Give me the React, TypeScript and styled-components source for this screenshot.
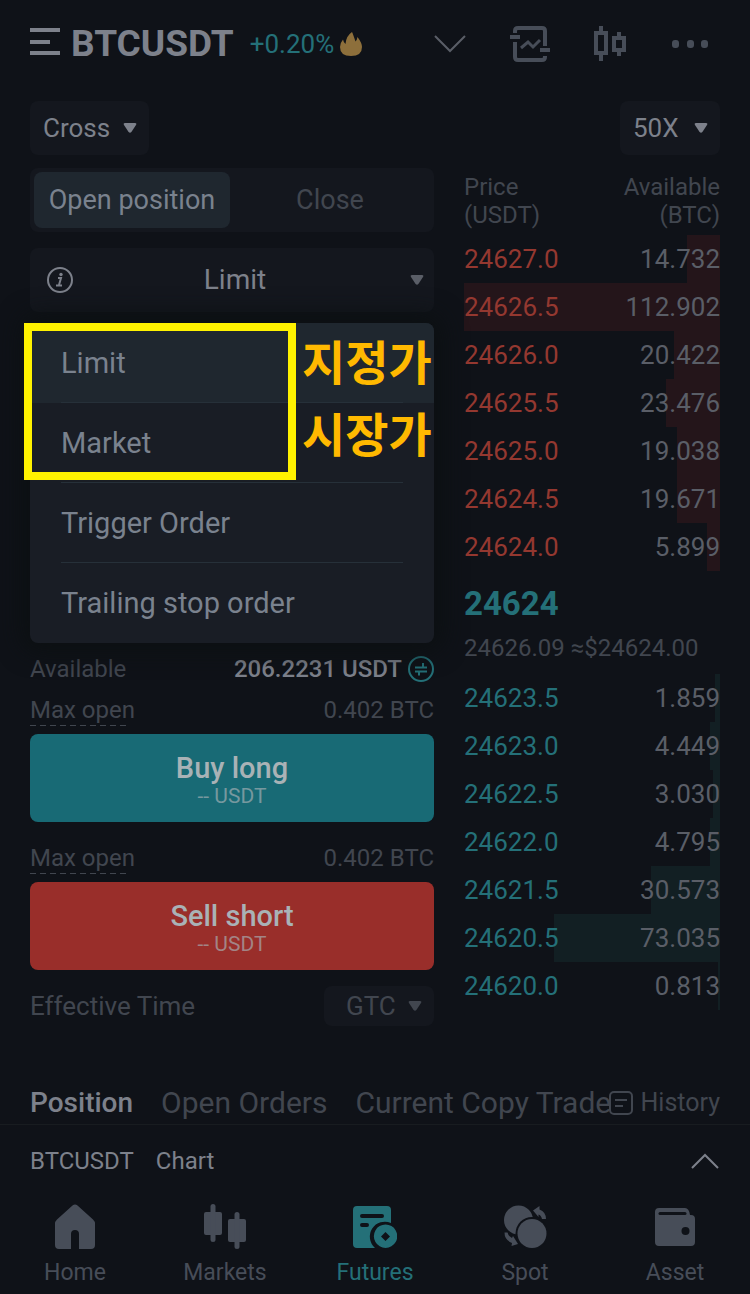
import React from "react";
import styled, { createGlobalStyle } from "styled-components";

const c = {
  bg: "#0f1218",
  panel: "#14171e",
  active: "#1f272f",
  menu: "#191d25",
  line: "#263039",
  text: "#7d818b",
  soft: "#7a828e",
  mute: "#41464f",
  icon: "#474d58",
  dim: "#5a5e67",
  teal: "#247078",
  tealFill: "#186a75",
  red: "#943830",
  redFill: "#992e2a",
};

const Global = createGlobalStyle`
  *, *::before, *::after { box-sizing: border-box; }
  body { margin: 0; background: ${c.bg}; }
  button, select { font: inherit; color: inherit; background: none; border: 0; padding: 0; margin: 0; }
  svg { display: block; flex: none; }
`;

const Page = styled.main`
  min-height: 100vh;
  display: flex;
  flex-direction: column;
  overflow: hidden;
  background: ${c.bg};
  color: ${c.text};
  font-family: Roboto, "Noto Sans CJK KR", sans-serif;
  font-size: 24px;
  line-height: 28px;
`;

const Header = styled.header`
  display: flex;
  align-items: center;
  height: 88px;
  padding: 0 20px 0 30px;
`;
const Pair = styled.h1`
  margin: 0 16px 0 11px;
  font-size: 37px;
  line-height: 44px;
  font-weight: 700;
`;
const Change = styled.span`
  margin-right: 6px;
  font-size: 26px;
  color: ${c.teal};
`;
const Actions = styled.div`
  display: flex;
  margin-left: auto;
  color: ${c.icon};
`;
const IconButton = styled.button`
  display: flex;
  align-items: center;
  justify-content: center;
  width: 80px;
  height: 48px;
`;
const PlainButton = styled.button`
  display: flex;
`;

const Modes = styled.div`
  display: flex;
  justify-content: space-between;
  padding: 13px 30px;
`;
const Picker = styled.label<{ $w: number; $h: number; $tone?: string }>`
  display: flex;
  align-items: center;
  position: relative;
  width: ${(p) => p.$w}px;
  height: ${(p) => p.$h}px;
  border-radius: 8px;
  background: ${c.panel};
  color: ${(p) => p.$tone ?? c.text};
  font-size: 26px;
  svg {
    position: absolute;
    right: 12px;
    pointer-events: none;
  }
`;
const Select = styled.select<{ $pad: number }>`
  appearance: none;
  width: 100%;
  height: 100%;
  padding-left: ${(p) => p.$pad}px;
`;

const Columns = styled.div`
  display: grid;
  grid-template-columns: 404fr 256fr;
  gap: 30px;
  padding: 0 30px;
`;
const Order = styled.section`
  display: flex;
  flex-direction: column;
`;
const Segments = styled.div`
  display: flex;
  height: 64px;
  padding: 4px;
  border-radius: 8px;
  background: ${c.panel};
`;
const Segment = styled.button<{ $on?: boolean }>`
  flex: ${(p) => (p.$on ? "0 0 196px" : "1")};
  border-radius: 8px;
  font-size: 27px;
  background: ${(p) => (p.$on ? c.active : "transparent")};
  color: ${(p) => (p.$on ? c.soft : c.mute)};
`;
const TypeButton = styled.button`
  display: grid;
  grid-template-columns: 28px 1fr 28px;
  align-items: center;
  height: 64px;
  margin-top: 16px;
  padding: 0 10px 0 16px;
  border-radius: 8px;
  background: ${c.panel};
  color: ${c.text};
  font-size: 28px;
  svg:last-child {
    justify-self: end;
    color: ${c.dim};
  }
`;
const MenuArea = styled.div`
  position: relative;
  margin-top: 11px;
`;
const Menu = styled.ul`
  margin: 0;
  padding: 0;
  list-style: none;
  border-radius: 8px;
  background: ${c.menu};
  box-shadow: 0 0 24px 8px #0c1012;
`;
const Option = styled.li<{ $on?: boolean }>`
  height: 80px;
  padding: 0 31px;
  border-radius: ${(p) => (p.$on ? "8px 8px 0 0" : "0")};
  background: ${(p) => (p.$on ? c.active : "transparent")};
  &:not(:last-child) button {
    border-bottom: 1px solid ${c.line};
  }
`;
const OptionButton = styled.button`
  width: 100%;
  height: 80px;
  text-align: left;
  font-size: 29px;
  color: ${c.soft};
`;
const Marker = styled.div`
  position: absolute;
  top: 0;
  left: -6px;
  width: 272px;
  height: 157px;
  border: 8px solid #fff200;
  pointer-events: none;
`;
const Notes = styled.div`
  position: absolute;
  top: 1px;
  left: 272px;
  display: grid;
  grid-auto-rows: 72px;
  align-items: center;
  color: #ffb900;
  font: 700 47px/72px "Noto Sans CJK KR", sans-serif;
  white-space: nowrap;
  pointer-events: none;
`;

const Row = styled.div<{ $mt: number }>`
  display: flex;
  align-items: center;
  justify-content: space-between;
  height: 32px;
  margin-top: ${(p) => p.$mt}px;
  color: ${c.mute};
`;
const Balance = styled.span`
  display: flex;
  align-items: center;
  gap: 6px;
  color: ${c.text};
  font-weight: 500;
  svg {
    color: ${c.teal};
  }
`;
const Hint = styled.span`
  height: 32px;
  padding-top: 2px;
  background: repeating-linear-gradient(90deg, ${c.mute} 0 6px, transparent 6px 10px) bottom left / 100px 1px no-repeat;
`;
const Submit = styled.button<{ $fill: string }>`
  display: flex;
  flex-direction: column;
  align-items: center;
  justify-content: center;
  height: 88px;
  margin-top: 8px;
  padding-top: 4px;
  border-radius: 8px;
  background: ${(p) => p.$fill};
  color: #a9b2b6;
  font-weight: 500;
  font-size: 29px;
  line-height: 32px;
  small {
    font-weight: 400;
    font-size: 21px;
    line-height: 24px;
    opacity: 0.65;
  }
`;
const Effective = styled.div`
  display: flex;
  align-items: center;
  justify-content: space-between;
  margin-top: 16px;
  color: ${c.mute};
  font-size: 26px;
`;

const Book = styled.table`
  width: 100%;
  border-collapse: collapse;
  align-self: start;
  font-size: 26px;
  th {
    height: 67px;
    padding: 5px 0 0;
    vertical-align: top;
    text-align: left;
    font-weight: 400;
    font-size: 24px;
    color: ${c.mute};
  }
  td {
    padding: 0;
  }
  th:last-child,
  td + td {
    text-align: right;
  }
`;
const Level = styled.tr<{ $depth: number; $side: "ask" | "bid" }>`
  height: 48px;
  color: ${c.dim};
  background: linear-gradient(
    to left,
    ${(p) => (p.$side === "ask" ? "#24151a" : "#121f23")} ${(p) => p.$depth}%,
    transparent ${(p) => p.$depth}%
  );
  td:first-child {
    color: ${(p) => (p.$side === "ask" ? c.red : c.teal)};
  }
`;
const Last = styled.td`
  height: 103px;
  color: ${c.mute};
  strong {
    display: block;
    padding-bottom: 10px;
    font-size: 33px;
    line-height: 40px;
    color: ${c.teal};
  }
  span {
    display: block;
    font-size: 24px;
    white-space: nowrap;
  }
`;

const Positions = styled.div`
  display: flex;
  align-items: center;
  height: 43px;
  margin-top: 56px;
  padding: 0 30px;
  border-bottom: 1px solid #181c20;
  color: ${c.mute};
`;
const Tabs = styled.div`
  display: flex;
  gap: 28px;
  flex: 1;
  min-width: 0;
  overflow: hidden;
`;
const Tab = styled.button<{ $on?: boolean }>`
  flex: none;
  white-space: nowrap;
  font-weight: ${(p) => (p.$on ? 500 : 400)};
  font-size: ${(p) => (p.$on ? 28 : 30)}px;
  line-height: 40px;
  color: ${(p) => (p.$on ? c.text : c.mute)};
`;
const History = styled.a`
  display: flex;
  align-items: center;
  gap: 7px;
  color: inherit;
  font-size: 25px;
  text-decoration: none;
`;
const ChartBar = styled.div`
  display: flex;
  align-items: center;
  gap: 22px;
  height: 72px;
  padding: 0 30px;
  button:last-child {
    margin-left: auto;
  }
`;
const Nav = styled.nav`
  display: grid;
  grid-template-columns: repeat(5, 1fr);
  height: 97px;
  padding-top: 7px;
`;
const NavLink = styled.a<{ $on?: boolean }>`
  display: flex;
  flex-direction: column;
  align-items: center;
  gap: 9px;
  color: ${(p) => (p.$on ? c.teal : c.icon)};
  font-size: 23px;
  text-decoration: none;
`;

const Caret = () => (
  <svg width="14" height="12" viewBox="0 0 14 12" aria-hidden="true">
    <path d="M2 1h10q2 0 1 2L8.400 10q-1.400 1.600-2.800 0L1 3Q0 1 2 1z" fill="currentColor" />
  </svg>
);

const navItems = [
  {
    name: "Home",
    icon: (
      <path d="M19.500 1.500q2.500-2 5 0L40 15.500q2 2 2 4V41q0 4-4 4H26V30q0-4-4-4t-4 4v15H6q-4 0-4-4V19.500q0-2 2-4z" fill="currentColor" />
    ),
  },
  {
    name: "Markets",
    icon: (
      <g fill="currentColor">
        <rect x="1" y="8" width="18" height="23" rx="2" />
        <rect x="7.500" y="0" width="5" height="38" rx="2.500" />
        <rect x="25" y="15" width="18" height="23" rx="2" />
        <rect x="31.500" y="8" width="5" height="37" rx="2.500" />
      </g>
    ),
  },
  {
    name: "Futures",
    icon: (
      <g>
        <path d="M4 2h30q4 0 4 4v13a15 15 0 0 0-16 25H4q-4 0-4-4V6q0-4 4-4z" fill="currentColor" />
        <path d="M9 12h20M9 21h5" stroke={c.bg} strokeWidth="4" strokeLinecap="round" />
        <path d="M32.500 20.500a11.700 11.700 0 1 0 .1 0zM32.500 28l4.500 4.500-4.500 4.500-4.500-4.500z" fill="currentColor" fillRule="evenodd" />
      </g>
    ),
  },
  {
    name: "Spot",
    icon: (
      <g fill="currentColor">
        <circle cx="15.500" cy="16" r="14.500" />
        <circle cx="29" cy="29.500" r="16.500" fill={c.bg} />
        <circle cx="29" cy="29.500" r="14.500" />
        <path d="M30 6.500L36.500 2v3.500Q43 8 43 15h-4q-1-4-3.500-4.500V13zM1.500 28.500h3q1 4 4.500 5.500l1-2 5 8L8.500 42l.5-3q-7.500-3-7.500-10.500z" />
      </g>
    ),
  },
  {
    name: "Asset",
    icon: (
      <g>
        <path d="M6 4h26q4 0 5 7h1q4 0 4 4v23q0 4-4 4H6q-4 0-4-4V8q0-4 4-4z" fill="currentColor" />
        <path d="M7 9.500h25" stroke={c.bg} strokeWidth="3" strokeLinecap="round" />
        <circle cx="32.500" cy="27" r="4" fill={c.bg} />
      </g>
    ),
  },
];

const asks = [
  ["24627.0", "14.732"],
  ["24626.5", "112.902"],
  ["24626.0", "20.422"],
  ["24625.5", "23.476"],
  ["24625.0", "19.038"],
  ["24624.5", "19.671"],
  ["24624.0", "5.899"],
];
const bids = [
  ["24623.5", "1.859"],
  ["24623.0", "4.449"],
  ["24622.5", "3.030"],
  ["24622.0", "4.795"],
  ["24621.5", "30.573"],
  ["24620.5", "73.035"],
  ["24620.0", "0.813"],
];
const deepest = Math.max(...[...asks, ...bids].map((l) => Number(l[1])));

const Levels = ({ rows, side }: { rows: string[][]; side: "ask" | "bid" }) => (
  <tbody>
    {rows.map(([price, size]) => (
      <Level key={price} $side={side} $depth={Math.round((Number(size) / deepest) * 100)}>
        <td>{price}</td>
        <td>{size}</td>
      </Level>
    ))}
  </tbody>
);

const OpenSide = ({ label, fill }: { label: string; fill: string }) => (
  <Submit type="button" $fill={fill}>
    {label}
    <small>-- USDT</small>
  </Submit>
);

const MaxOpen = ({ mt }: { mt: number }) => (
  <Row $mt={mt}>
    <Hint>Max open</Hint>
    <span>0.402 BTC</span>
  </Row>
);

export default function App() {
  return (
    <Page>
      <Global />
      <Header>
        <PlainButton type="button" aria-label="Menu">
          <svg width="30" height="32" viewBox="0 0 30 32">
            <path d="M0 2h30M0 14h20M0 25h30" stroke={c.text} strokeWidth="4" />
          </svg>
        </PlainButton>
        <Pair>BTCUSDT</Pair>
        <Change>+0.20%</Change>
        <svg width="22" height="24" viewBox="0 0 22 24" aria-hidden="true">
          <path d="M12 0q1 2 3.500 9.500Q17 8 17.500 5 22 11 22 15q0 9-11 9T0 15q0-4 3-7.500.500 3 2.500 4.500Q6 4 12 0z" fill="#8d6f3b" />
        </svg>
        <Actions>
          <IconButton type="button" aria-label="More pairs">
            <svg width="32" height="18" viewBox="0 0 32 18" fill="none">
              <path d="M1 1l15 15L31 1" stroke={c.dim} strokeWidth="2" />
            </svg>
          </IconButton>
          <IconButton type="button" aria-label="Grid trading">
            <svg width="40" height="36" viewBox="0 0 40 36" fill="none" stroke="currentColor" strokeWidth="4">
              <path d="M5 7V5q0-3 3-3h24q3 0 3 3v15M5 16v15q0 3 3 3h24q3 0 3-3v-1M0 11h10M30 24h10" />
              <path d="M11 22l7-6 5 5 7-7" strokeWidth="3" />
            </svg>
          </IconButton>
          <IconButton type="button" aria-label="Candles">
            <svg width="34" height="36" viewBox="0 0 34 36" fill="none" stroke="currentColor" strokeWidth="4">
              <path d="M3 7h10v20H3zM8 0v6M8 28v7M21 12h10v12H21zM26 6v5M26 25v5" />
            </svg>
          </IconButton>
          <IconButton type="button" aria-label="More">
            <svg width="38" height="8" viewBox="0 0 38 8" fill="currentColor">
              <rect x="1" width="7" height="8" rx="3" />
              <rect x="16" width="7" height="8" rx="3" />
              <rect x="30" width="7" height="8" rx="3" />
            </svg>
          </IconButton>
        </Actions>
      </Header>

      <Modes>
        <Picker $w={119} $h={54}>
          <Select aria-label="Margin mode" $pad={13}>
            <option>Cross</option>
          </Select>
          <Caret />
        </Picker>
        <Picker $w={100} $h={54}>
          <Select aria-label="Leverage" $pad={13}>
            <option>50X</option>
          </Select>
          <Caret />
        </Picker>
      </Modes>

      <Columns>
        <Order>
          <Segments>
            <Segment type="button" $on>
              Open position
            </Segment>
            <Segment type="button">Close</Segment>
          </Segments>
          <TypeButton type="button" aria-haspopup="listbox" aria-expanded="true">
            <svg width="28" height="28" viewBox="0 0 28 28" fill="none" stroke="currentColor" strokeWidth="2">
              <circle cx="14" cy="14" r="12" />
              <path d="M12 12h3l-2 7M10 19.500h6" />
              <circle cx="15" cy="8.500" r="1.700" fill="currentColor" stroke="none" />
            </svg>
            <span>Limit</span>
            <Caret />
          </TypeButton>
          <MenuArea>
            <Menu>
              {["Limit", "Market", "Trigger Order", "Trailing stop order"].map((name, i) => (
                <Option key={name} $on={i === 0}>
                  <OptionButton type="button">{name}</OptionButton>
                </Option>
              ))}
            </Menu>
            <Marker />
            <Notes>
              <span>지정가</span>
              <span>시장가</span>
            </Notes>
          </MenuArea>
          <Row $mt={10}>
            <span>Available</span>
            <Balance>
              206.2231 USDT
              <svg width="26" height="26" viewBox="0 0 26 26" fill="none" stroke="currentColor" strokeWidth="2">
                <circle cx="13" cy="13" r="12" />
                <path d="M7 11.500h12M15 7v4M19 15.500H7M11 15v4.500" />
              </svg>
            </Balance>
          </Row>
          <MaxOpen mt={9} />
          <OpenSide label="Buy long" fill={c.tealFill} />
          <MaxOpen mt={20} />
          <OpenSide label="Sell short" fill={c.redFill} />
          <Effective>
            <span>Effective Time</span>
            <Picker $w={110} $h={40} $tone={c.mute}>
              <Select aria-label="Effective Time" $pad={22}>
                <option>GTC</option>
              </Select>
              <Caret />
            </Picker>
          </Effective>
        </Order>

        <Book>
          <thead>
            <tr>
              <th scope="col">
                Price
                <br />
                (USDT)
              </th>
              <th scope="col">
                Available
                <br />
                (BTC)
              </th>
            </tr>
          </thead>
          <Levels rows={asks} side="ask" />
          <tbody>
            <tr>
              <Last colSpan={2}>
                <strong>24624</strong>
                <span>24626.09 ≈$24624.00</span>
              </Last>
            </tr>
          </tbody>
          <Levels rows={bids} side="bid" />
        </Book>
      </Columns>

      <Positions>
        <Tabs>
          <Tab type="button" $on>
            Position
          </Tab>
          <Tab type="button">Open Orders</Tab>
          <Tab type="button">Current Copy Trades</Tab>
        </Tabs>
        <History href="#history">
          <svg width="24" height="24" viewBox="0 0 24 24" fill="none" stroke="currentColor" strokeWidth="2">
            <rect x="1" y="1" width="22" height="22" rx="4" />
            <path d="M6 9h12M6 15h8" />
          </svg>
          History
        </History>
      </Positions>

      <ChartBar>
        <span>BTCUSDT</span>
        <span>Chart</span>
        <PlainButton type="button" aria-label="Expand chart">
          <svg width="30" height="16" viewBox="0 0 30 16" fill="none">
            <path d="M2 15L15 2l13 13" stroke={c.text} strokeWidth="2" />
          </svg>
        </PlainButton>
      </ChartBar>

      <Nav>
        {navItems.map((item) => (
          <NavLink key={item.name} href={"#" + item.name.toLowerCase()} $on={item.name === "Futures"}>
            <svg width="44" height="46" viewBox="0 0 44 46" aria-hidden="true">
              {item.icon}
            </svg>
            {item.name}
          </NavLink>
        ))}
      </Nav>
    </Page>
  );
}
